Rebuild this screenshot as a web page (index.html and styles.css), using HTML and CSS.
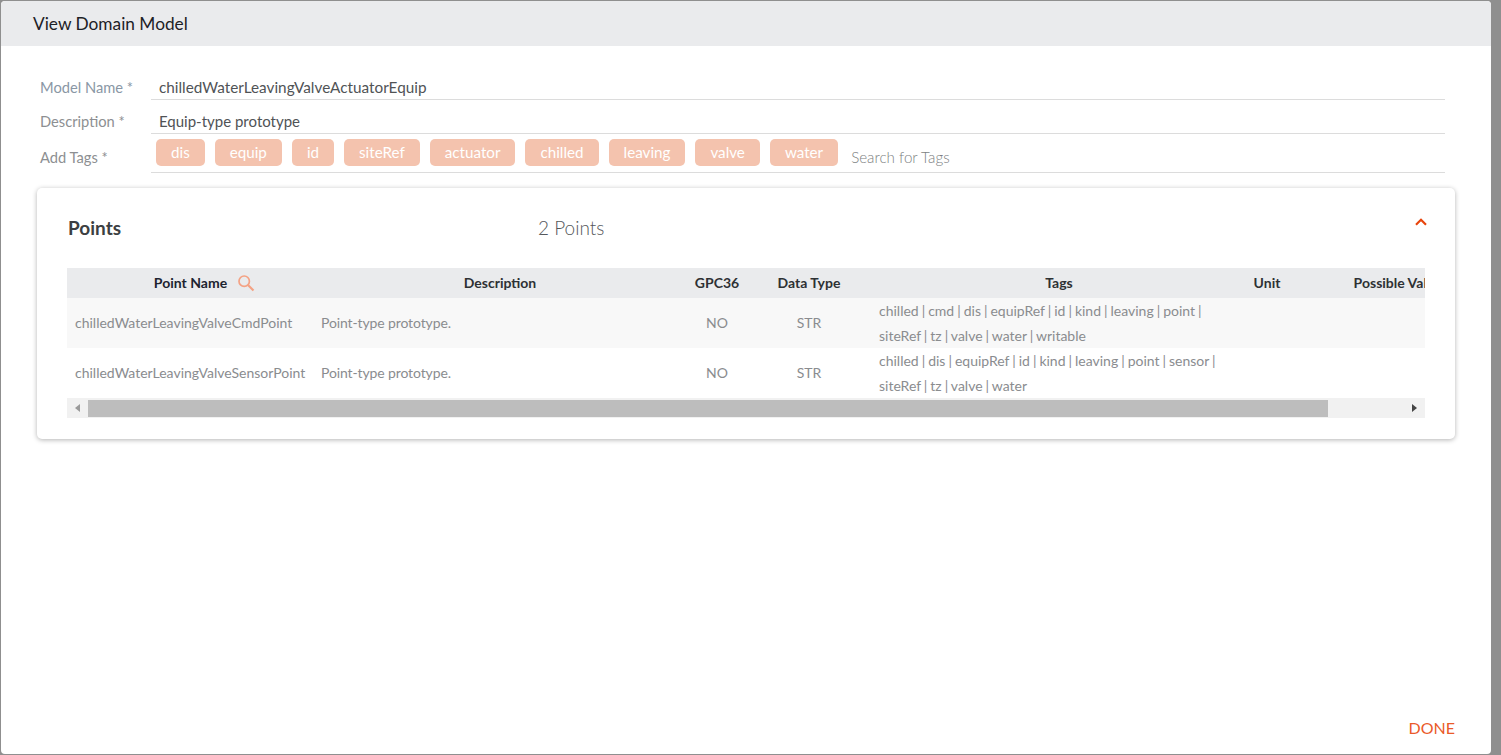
FILE: index.html
```html
<!DOCTYPE html>
<html lang="en">
<head>
  <meta charset="UTF-8" />
  <title>View Domain Model</title>
  <link rel="stylesheet" href="styles.css">
</head>
<body>
  <div class="dialog">
    <div class="dialog-title">View Domain Model</div>
    <div class="dialog-content">
      <div class="form-row">
        <label class="form-label">Model Name *</label>
        <div class="form-value">chilledWaterLeavingValveActuatorEquip</div>
      </div>
      <div class="form-row">
        <label class="form-label">Description *</label>
        <div class="form-value">Equip-type prototype</div>
      </div>
      <div class="form-row tags-row">
        <label class="form-label">Add Tags *</label>
        <div class="tags-input">
          <span class="chip">dis</span>
          <span class="chip">equip</span>
          <span class="chip">id</span>
          <span class="chip">siteRef</span>
          <span class="chip">actuator</span>
          <span class="chip">chilled</span>
          <span class="chip">leaving</span>
          <span class="chip">valve</span>
          <span class="chip">water</span>
          <span class="tags-placeholder">Search for Tags</span>
        </div>
      </div>

      <div class="card">
        <div class="card-header">
          <div class="card-title">Points</div>
          <div class="card-count">2 Points</div>
          <svg class="chevron" viewBox="0 0 12 8" width="12" height="8">
            <path d="M1 6.8 L6 1.8 L11 6.8" fill="none" stroke="#e8470f" stroke-width="2.2"/>
          </svg>
        </div>
        <div class="table-wrap">
          <table class="points-table">
            <thead>
              <tr>
                <th class="col-name">
                  <span class="th-search">Point Name
                    <svg viewBox="0 0 18 18" width="18" height="18">
                      <circle cx="7.2" cy="7.2" r="5.2" fill="none" stroke="#f4a284" stroke-width="1.7"/>
                      <path d="M11 11 L16.5 16.5" stroke="#f4a284" stroke-width="2.2"/>
                    </svg>
                  </span>
                </th>
                <th class="col-desc">Description</th>
                <th class="col-gpc">GPC36</th>
                <th class="col-type">Data Type</th>
                <th class="col-tags">Tags</th>
                <th class="col-unit">Unit</th>
                <th class="col-values">Possible Values</th>
              </tr>
            </thead>
            <tbody>
              <tr>
                <td>chilledWaterLeavingValveCmdPoint</td>
                <td class="desc-cell">Point-type prototype.</td>
                <td class="center">NO</td>
                <td class="center">STR</td>
                <td class="tags-cell">chilled | cmd | dis | equipRef | id | kind | leaving | point | siteRef | tz | valve | water | writable</td>
                <td></td>
                <td></td>
              </tr>
              <tr>
                <td>chilledWaterLeavingValveSensorPoint</td>
                <td class="desc-cell">Point-type prototype.</td>
                <td class="center">NO</td>
                <td class="center">STR</td>
                <td class="tags-cell">chilled | dis | equipRef | id | kind | leaving | point | sensor | siteRef | tz | valve | water</td>
                <td></td>
                <td></td>
              </tr>
            </tbody>
          </table>
        </div>
        <div class="scrollbar">
          <span class="arrow arrow-left"></span>
          <div class="scroll-thumb"></div>
          <span class="arrow arrow-right"></span>
        </div>
      </div>
    </div>
    <div class="dialog-actions">
      <button class="done-btn">DONE</button>
    </div>
  </div>
</body>
</html>
```

FILE: styles.css
```css
html, body {
  height: 100%;
}

body {
  margin: 0;
  padding: 1px 10px 1px 1px;
  box-sizing: border-box;
  height: 755px;
  overflow: hidden;
  background-color: #8f8f8f;
  font-family: Lato, 'Open Sans', sans-serif;
}

.dialog {
  height: 100%;
  background-color: #fff;
  border-radius: 4px;
  display: flex;
  flex-direction: column;
  overflow: hidden;
}

.dialog-title {
  height: 45px;
  line-height: 45px;
  padding-left: 32px;
  background-color: #eaebed;
  font-size: 17.3px;
  color: #1d2126;
}

.dialog-content {
  flex: 1;
  padding: 20px 36px 0;
}

.form-row {
  display: flex;
  align-items: center;
  height: 34px;
  margin-right: 10px;
  padding-left: 3px;
}

.form-label {
  width: 111px;
  flex: none;
  padding-top: 8px;
  font-size: 14.7px;
  color: #8d8f92;
}

.form-value {
  flex: 1;
  height: 24px;
  line-height: 24px;
  padding: 9px 0 0 8px;
  border-bottom: 1px solid #dcdcdc;
  font-size: 15.3px;
  color: #505356;
}

.form-row:first-child .form-label {
  color: #8a97a5;
}

.form-row:nth-child(2) .form-value {
  font-size: 15px;
}

.tags-row {
  height: 39px;
}

.tags-row .form-label {
  padding-top: 6px;
}

.tags-input {
  flex: 1;
  height: 38px;
  padding-left: 5px;
  border-bottom: 1px solid #dcdcdc;
  display: flex;
  gap: 10px;
}

.chip {
  height: 27px;
  line-height: 27px;
  margin-top: 5px;
  padding: 0 15px;
  border-radius: 5px;
  background-color: #f4c3ae;
  color: #fff;
  font-size: 15.2px;
}

.tags-placeholder {
  margin: 13px 0 0 3px;
  font-size: 15.2px;
  line-height: 20px;
  font-weight: 300;
  color: #7d7f82;
}

.card {
  margin-top: 15px;
  height: 251px;
  box-sizing: border-box;
  padding: 0 30px;
  background-color: #fff;
  border-radius: 5px;
  box-shadow: 0 1px 5px rgba(0, 0, 0, 0.3);
}

.card-header {
  height: 80px;
  box-sizing: border-box;
  padding-bottom: 2px;
  display: flex;
  align-items: center;
  position: relative;
}

.card-title {
  width: 470px;
  padding-left: 1px;
  font-size: 19px;
  font-weight: 700;
  color: #3c3f42;
}

.card-count {
  font-size: 19px;
  font-weight: 300;
  color: #55585b;
}

.chevron {
  position: absolute;
  right: -2px;
  top: 30px;
}

.table-wrap {
  overflow: hidden;
}

.points-table {
  table-layout: fixed;
  width: 1448px;
  border-collapse: collapse;
  font-size: 14px;
}

.col-name { width: 246px; }
.col-desc { width: 374px; }
.col-gpc { width: 60px; }
.col-type { width: 124px; }
.col-tags { width: 376px; }
.col-unit { width: 40px; }
.col-values { width: 228px; }

.points-table th {
  height: 28px;
  padding: 0 0 2px;
  background-color: #eaebed;
  font-weight: 700;
  color: #2e3134;
  text-align: center;
  white-space: nowrap;
}

.th-search {
  display: inline-flex;
  align-items: center;
  gap: 10px;
  margin-left: 29px;
  color: #1d2430;
}

.th-search svg {
  flex: none;
  margin-top: 2px;
}

.points-table td {
  height: 48px;
  padding: 0 8px 2px;
  color: #8a8c8f;
  line-height: 25px;
  white-space: nowrap;
}

.points-table .tags-cell {
  height: 50px;
  padding-bottom: 0;
  white-space: normal;
  word-spacing: -0.6px;
}

.points-table .desc-cell {
  letter-spacing: -0.12px;
}

.points-table .center {
  text-align: center;
  padding: 0 0 2px;
}

.points-table tbody tr:nth-child(odd) td {
  background-color: #f8f8f8;
}

.scrollbar {
  height: 20px;
  background-color: #f1f1f1;
  display: flex;
  align-items: center;
  position: relative;
}

.scroll-thumb {
  position: absolute;
  left: 21px;
  width: 1240px;
  top: 2px;
  height: 17px;
  background-color: #bdbdbd;
}

.arrow {
  position: absolute;
  top: 6px;
  width: 0;
  height: 0;
  border-top: 4.5px solid transparent;
  border-bottom: 4.5px solid transparent;
}

.arrow-left {
  left: 8px;
  border-right: 5px solid #9a9a9a;
}

.arrow-right {
  right: 8px;
  border-left: 5px solid #444;
}

.dialog-actions {
  display: flex;
  justify-content: flex-end;
  padding: 0 36px 16px 0;
}

.done-btn {
  padding: 0;
  border: none;
  background: none;
  font-family: inherit;
  font-size: 16px;
  line-height: 20px;
  color: #ea5a2a;
  cursor: pointer;
}
```
